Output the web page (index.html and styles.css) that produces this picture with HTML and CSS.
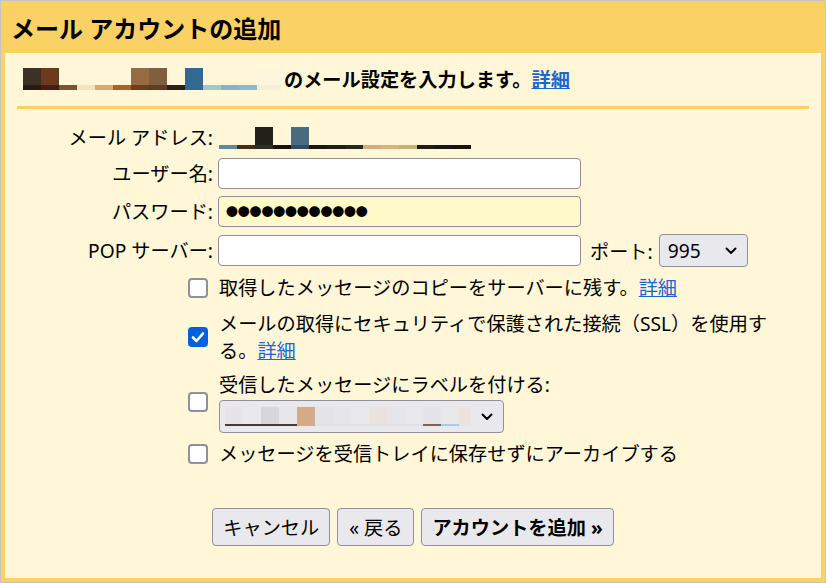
FILE: index.html
```html
<!DOCTYPE html>
<html lang="ja">
<head>
    <meta charset="UTF-8">
    <meta name="viewport" content="width=device-width, initial-scale=1.0">
    <title>メール アカウントの追加</title>
    <link rel="stylesheet" href="styles.css">
</head>
<body>
    <div class="dialog">
        <div class="header">メール アカウントの追加</div>
        <div class="content">
            <div class="intro">
                <span class="blur blur-intro"></span>
                <span>のメール設定を入力します。<a href="#" class="link">詳細</a></span>
            </div>
            <div class="rule"></div>

            <div class="form">
                <div class="label">メール アドレス:</div>
                <div class="field"><span class="blur blur-email"></span></div>

                <div class="label">ユーザー名:</div>
                <div class="field"><input type="text" class="text-input"></div>

                <div class="label">パスワード:</div>
                <div class="field"><input type="text" class="text-input password" value="●●●●●●●●●●●●"></div>

                <div class="label">POP サーバー:</div>
                <div class="field field-inline">
                    <input type="text" class="text-input">
                    <span class="port-label">ポート:</span>
                    <div class="select select-port">
                        <span>995</span>
                        <svg width="12" height="8" viewBox="0 0 12 8"><path d="M1.5 1.5 L6 6 L10.5 1.5" fill="none" stroke="#000" stroke-width="2" stroke-linecap="round" stroke-linejoin="round"/></svg>
                    </div>
                </div>
            </div>

            <div class="options">
                <div class="option">
                    <span class="box"></span>
                    <span class="option-text">取得したメッセージのコピーをサーバーに残す。<a href="#" class="link">詳細</a></span>
                </div>
                <div class="option option-ssl">
                    <span class="box checked">
                        <svg width="20" height="20" viewBox="0 0 20 20"><path d="M5 10.5 L8.5 14 L15 6.5" fill="none" stroke="#fff" stroke-width="2.6" stroke-linecap="round" stroke-linejoin="round"/></svg>
                    </span>
                    <span class="option-text">メールの取得にセキュリティで保護された接続（SSL）を使用する。<a href="#" class="link">詳細</a></span>
                </div>
                <div class="option">
                    <span class="box"></span>
                    <div class="option-stack">
                        <span class="option-text">受信したメッセージにラベルを付ける:</span>
                        <div class="select select-label">
                            <span class="blur blur-label"></span>
                            <svg width="12" height="8" viewBox="0 0 12 8"><path d="M1.5 1.5 L6 6 L10.5 1.5" fill="none" stroke="#000" stroke-width="2" stroke-linecap="round" stroke-linejoin="round"/></svg>
                        </div>
                    </div>
                </div>
                <div class="option">
                    <span class="box"></span>
                    <span class="option-text">メッセージを受信トレイに保存せずにアーカイブする</span>
                </div>
            </div>

            <div class="actions">
                <button class="btn">キャンセル</button>
                <button class="btn btn-back">« 戻る</button>
                <button class="btn btn-primary">アカウントを追加 »</button>
            </div>
        </div>
    </div>
</body>
</html>
```

FILE: styles.css
```css
body {
    margin: 0;
    font-family: "Noto Sans", "Noto Sans CJK JP", sans-serif;
    font-size: 19.2px;
    color: #000;
}

.dialog {
    box-sizing: border-box;
    width: 826px;
    height: 583px;
    border: 1px solid #c4c4c4;
    background-color: #fad165;
    padding: 0 4px 4px;
    display: flex;
    flex-direction: column;
}

.header {
    height: 52px;
    display: flex;
    align-items: center;
    padding-left: 6px;
    font-size: 24px;
    font-weight: bold;
}

.content {
    flex: 1;
    background-color: #fff7d7;
    padding-top: 12px;
}

.link {
    color: #1a66d2;
    text-decoration: underline;
}

/* ぼかしたメールアドレス */
.blur {
    display: inline-block;
    background-repeat: no-repeat;
}

.blur-intro {
    width: 258px;
    height: 22px;
    margin-right: 3px;
    background-image:
        linear-gradient(to right,
            #3c3123 0 18px, #6c3b1e 18px 36px, transparent 36px 108px,
            #966b44 108px 126px, #7f5f3c 126px 144px, transparent 144px 162px,
            #336891 162px 180px, transparent 180px 234px, #fdf5dc 234px 258px),
        linear-gradient(to right,
            #251b12 0 18px, #4a1d14 18px 36px, #7a5534 36px 54px, #f4e3c0 54px 72px,
            #d4aa74 72px 90px, #a8602c 90px 108px, #6b3e1e 108px 126px, #5e3d20 126px 144px,
            #2d1e17 144px 162px, #336891 162px 180px, #a6c6c2 180px 198px, #8fb2ba 198px 216px,
            #92b7c6 216px 234px, #f4efd6 234px 258px);
    background-size: 100% 17px, 100% 5px;
    background-position: top, bottom;
}

.blur-email {
    width: 252px;
    height: 22px;
    margin-left: 1px;
    background-image:
        linear-gradient(to right,
            transparent 0 36px, #22201b 36px 54px, transparent 54px 72px,
            #4a6a80 72px 90px, transparent 90px 252px),
        linear-gradient(to right,
            #5b89a5 0 18px, #4a2c16 18px 36px, #2a3227 36px 54px, #17120f 54px 72px,
            #2d4d64 72px 90px, #151a17 90px 108px, #1a1e1b 108px 126px, #232823 126px 144px,
            #d3ad80 144px 162px, #d8b37e 162px 180px, #c9ad7b 180px 198px, #231a14 198px 216px,
            #15171b 216px 234px, #19120e 234px 252px);
    background-size: 100% 18px, 100% 4px;
    background-position: top, bottom;
}

.blur-label {
    width: 246px;
    height: 19px;
    background-image:
        linear-gradient(to right,
            #e6e4e8 0 18px, #e9e8ec 18px 36px, #d7d6d9 36px 54px, #e7e6ea 54px 72px,
            #d4ab88 72px 90px, #e4e3e7 90px 108px, #e6e5e9 108px 126px, #e8e7eb 126px 144px,
            #ebe2dd 144px 162px, #e6e5e9 162px 180px, #e8e7ea 180px 198px, #e5e4e8 198px 216px,
            #e8e7ea 216px 234px, #ebe3dc 234px 246px),
        linear-gradient(to right,
            #4b3b37 0 72px, #d4ab88 72px 90px, #e0dfe3 90px 198px,
            #7a6455 198px 216px, #a8cde0 216px 234px, #ebe3dc 234px 246px);
    background-size: 100% 17px, 100% 2px;
    background-position: top, bottom;
}

.intro {
    display: flex;
    align-items: center;
    height: 27px;
    padding-left: 18px;
    font-weight: bold;
}

.rule {
    height: 3px;
    margin: 14px 12px 0;
    background-color: #fad165;
}

/* 入力フォーム */
.form {
    display: grid;
    grid-template-columns: 208px max-content;
    column-gap: 5px;
    row-gap: 7px;
    align-items: center;
    margin-top: 15px;
}

.label {
    text-align: right;
    line-height: 27px;
}

.field {
    display: flex;
    align-items: center;
    height: 27px;
}

.field:has(.text-input) {
    height: auto;
}

.text-input {
    box-sizing: border-box;
    width: 363px;
    height: 31px;
    margin: 0;
    padding: 0 7px;
    border: 1px solid #8f8f9d;
    border-radius: 4px;
    background-color: #fff;
    font-family: inherit;
    font-size: 19.2px;
    outline: none;
}

.password {
    background-color: #fffac8;
    font-family: "Noto Sans CJK JP", sans-serif;
    font-size: 12px;
    letter-spacing: -0.2px;
}

.port-label {
    margin-left: 9px;
    margin-right: 6px;
}

.select {
    box-sizing: border-box;
    height: 33px;
    display: flex;
    align-items: center;
    justify-content: space-between;
    border: 1px solid #8f8f9d;
    border-radius: 4px;
    background-color: #e9e9ed;
}

.select-port {
    width: 89px;
    padding: 0 10px 0 8px;
}

.select-label {
    width: 285px;
    margin-top: 2px;
    padding: 0 10px 0 5px;
}

/* チェックボックス */
.options {
    display: flex;
    flex-direction: column;
    gap: 7px;
    margin-top: 7px;
    padding-left: 183px;
    padding-right: 30px;
}

.option {
    display: flex;
    align-items: center;
}

.option-ssl {
    margin-top: 2px;
}

.box {
    flex: none;
    box-sizing: border-box;
    width: 20px;
    height: 20px;
    margin-right: 11px;
    border: 2px solid #8f8f9d;
    border-radius: 4px;
    background-color: #fff;
}

.box.checked {
    border: none;
    background-color: #0060df;
}

.box svg {
    display: block;
}

.option-text {
    line-height: 27px;
}

.option-stack {
    display: flex;
    flex-direction: column;
}

/* ボタン */
.actions {
    display: flex;
    justify-content: center;
    gap: 7px;
    margin-top: 41px;
}

.btn {
    height: 38px;
    padding: 0 10px;
    border: 1px solid #8f8f9d;
    border-radius: 4px;
    background-color: #e9e9ed;
    color: #000;
    font-family: inherit;
    font-size: 19.2px;
    cursor: pointer;
}

.btn-back {
    padding: 0 11px;
}

.btn-primary {
    font-weight: bold;
    padding: 0 10px;
}
```
